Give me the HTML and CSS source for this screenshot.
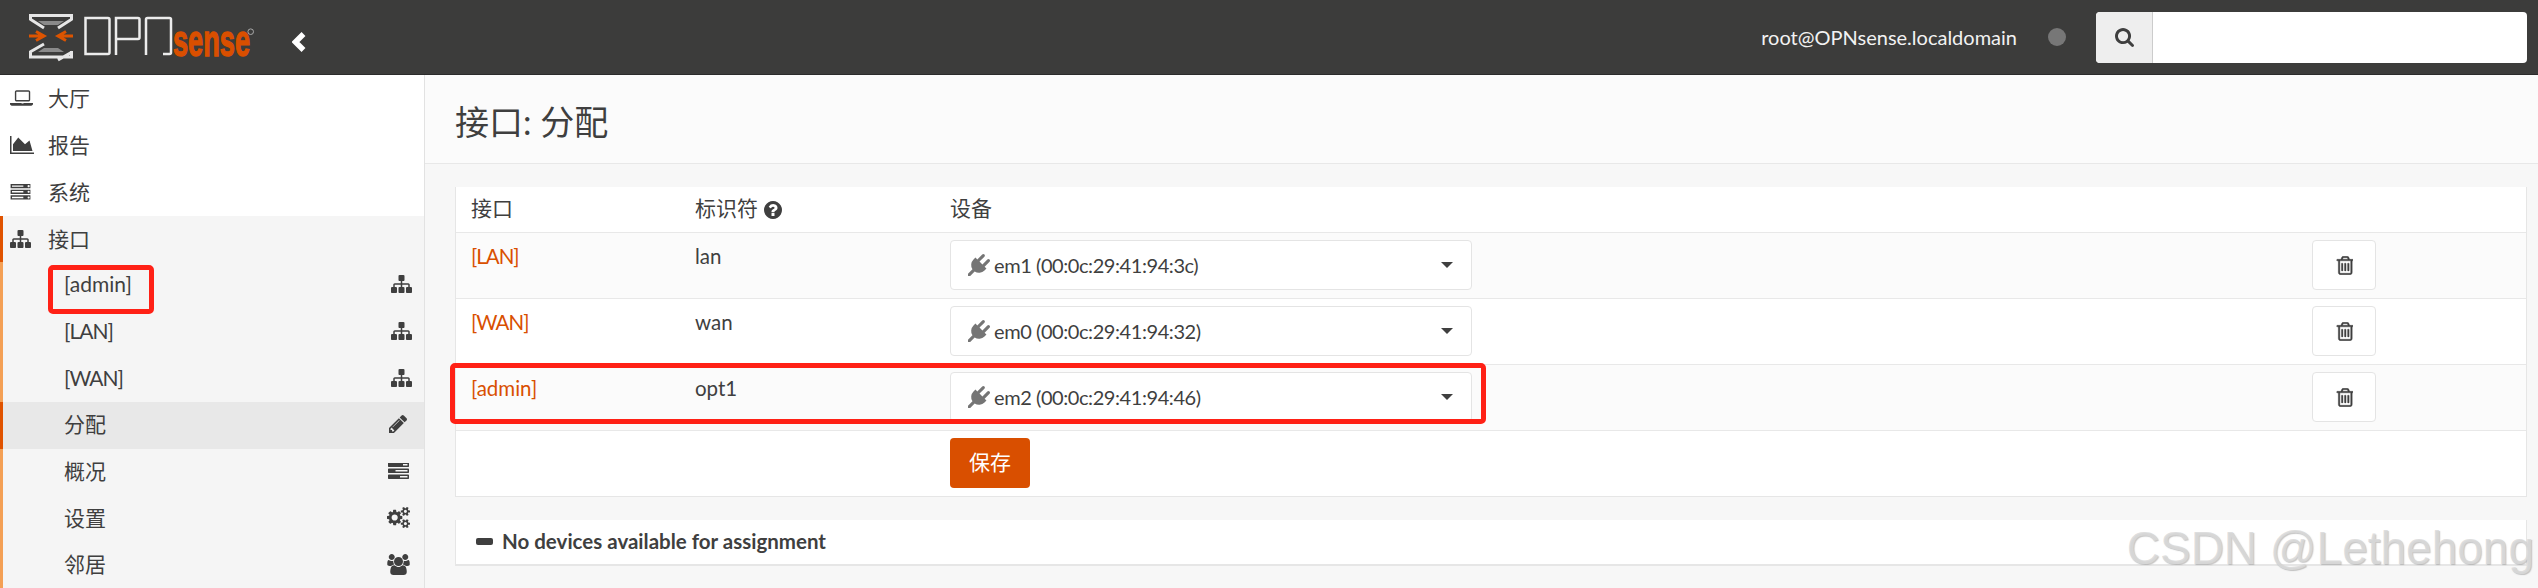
FILE: index.html
```html
<!DOCTYPE html>
<html lang="zh">
<head>
<meta charset="utf-8">
<title>接口: 分配</title>
<link rel="stylesheet" href="styles.css">
</head>
<body>
<svg class="defs" xmlns="http://www.w3.org/2000/svg">
  <symbol id="i-sitemap" viewBox="0 128 1792 1536"><path d="M1792 1248v320q0 40-28 68t-68 28h-320q-40 0-68-28t-28-68v-320q0-40 28-68t68-28h96v-192h-512v192h96q40 0 68 28t28 68v320q0 40-28 68t-68 28h-320q-40 0-68-28t-28-68v-320q0-40 28-68t68-28h96v-192h-512v192h96q40 0 68 28t28 68v320q0 40-28 68t-68 28h-320q-40 0-68-28t-28-68v-320q0-40 28-68t68-28h96v-192q0-52 38-90t90-38h512v-192h-96q-40 0-68-28t-28-68v-320q0-40 28-68t68-28h320q40 0 68 28t28 68v320q0 40-28 68t-68 28h-96v192h512q52 0 90 38t38 90v192h96q40 0 68 28t28 68z"/></symbol>
  <symbol id="i-laptop" viewBox="-192 256 2112 1408"><path d="M416 1280q-66 0-113-47t-47-113v-704q0-66 47-113t113-47h1088q66 0 113 47t47 113v704q0 66-47 113t-113 47h-1088zm-32-864v704q0 13 9.5 22.5t22.5 9.5h1088q13 0 22.5-9.5t9.5-22.5v-704q0-13-9.5-22.5t-22.5-9.5h-1088q-13 0-22.5 9.5t-9.5 22.5zm1376 992h160v96q0 66-75 113t-181 47h-1600q-106 0-181-47t-75-113v-96h1952zm-720 96q16 0 16-16t-16-16h-160q-16 0-16 16t16 16h160z"/></symbol>
  <symbol id="i-area" viewBox="0 128 2048 1536"><path d="M2048 1536v128h-2048v-1536h128v1408h1920zm-384-1024l256 896h-1664v-576l448-576 576 576z"/></symbol>
  <symbol id="i-server" viewBox="0 128 1792 1536"><path d="M128 1408h1024v-128h-1024v128zm0-512h1024v-128h-1024v128zm1600 448q0-40-28-68t-68-28-68 28-28 68 28 68 68 28 68-28 28-68zm-1600-960h1024v-128h-1024v128zm1600 448q0-40-28-68t-68-28-68 28-28 68 28 68 68 28 68-28 28-68zm0-512q0-40-28-68t-68-28-68 28-28 68 28 68 68 28 68-28 28-68zm64 832v384h-1792v-384h1792zm0-512v384h-1792v-384h1792zm0-512v384h-1792v-384h1792z"/></symbol>
  <symbol id="i-tasks" viewBox="0 192 1792 1408"><path d="M1024 1408h640v-128h-640v128zm-384-512h1024v-128h-1024v128zm640-512h384v-128h-384v128zm512 832v256q0 26-19 45t-45 19h-1664q-26 0-45-19t-19-45v-256q0-26 19-45t45-19h1664q26 0 45 19t19 45zm0-512v256q0 26-19 45t-45 19h-1664q-26 0-45-19t-19-45v-256q0-26 19-45t45-19h1664q26 0 45 19t19 45zm0-512v256q0 26-19 45t-45 19h-1664q-26 0-45-19t-19-45v-256q0-26 19-45t45-19h1664q26 0 45 19t19 45z"/></symbol>
  <symbol id="i-pencil" viewBox="128 149 1515 1515"><path d="M491 1536l91-91-235-235-91 91v107h128v128h107zm523-928q0-22-22-22-10 0-17 7l-542 542q-7 7-7 17 0 22 22 22 10 0 17-7l542-542q7-7 7-17zm-54-192l416 416-832 832h-416v-416zm683 96q0 53-37 90l-166 166-416-416 166-165q36-38 90-38 53 0 91 38l235 234q37 39 37 91z"/></symbol>
  <symbol id="i-cogs" viewBox="0 64 1920 1664"><path d="M896 896q0-106-75-181t-181-75-181 75-75 181 75 181 181 75 181-75 75-181zm768 512q0-52-38-90t-90-38-90 38-38 90q0 53 37.5 90.5t90.5 37.5 90.5-37.5 37.5-90.5zm0-1024q0-52-38-90t-90-38-90 38-38 90q0 53 37.5 90.5t90.5 37.5 90.5-37.5 37.5-90.5zm-384 421v185q0 10-7 19.5t-16 10.5l-155 24q-11 35-32 76 34 48 90 115 7 11 7 20 0 12-7 19-23 30-82.5 89.5t-78.5 59.5q-11 0-21-7l-115-90q-37 19-77 31-11 108-23 155-7 24-30 24h-186q-11 0-20-7.5t-10-17.5l-23-153q-34-10-75-31l-118 89q-7 7-20 7-11 0-21-8-144-133-144-160 0-9 7-19 10-14 41-53t47-61q-23-44-35-82l-152-24q-10-1-17-9.5t-7-19.5v-185q0-10 7-19.5t16-10.5l155-24q11-35 32-76-34-48-90-115-7-11-7-20 0-12 7-20 22-30 82-89t79-59q11 0 21 7l115 90q34-18 77-32 11-108 23-154 7-24 30-24h186q11 0 20 7.5t10 17.5l23 153q34 10 75 31l118-89q8-7 20-7 11 0 21 8 144 133 144 160 0 8-7 19-12 16-42 54t-45 60q23 48 34 82l152 23q10 2 17 10.5t7 19.5zm640 533v140q0 16-149 31-12 27-30 52 51 113 51 138 0 4-4 7-122 71-124 71-8 0-46-47t-52-68q-20 2-30 2t-30-2q-14 21-52 68t-46 47q-2 0-124-71-4-3-4-7 0-25 51-138-18-25-30-52-149-15-149-31v-140q0-16 149-31 13-29 30-52-51-113-51-138 0-4 4-7 4-2 35-20t59-34 30-16q8 0 46 46.5t52 67.5q20-2 30-2t30 2q51-71 92-112l6-2q4 0 124 70 4 3 4 7 0 25-51 138 17 23 30 52 149 15 149 31zm0-1024v140q0 16-149 31-12 27-30 52 51 113 51 138 0 4-4 7-122 71-124 71-8 0-46-47t-52-68q-20 2-30 2t-30-2q-14 21-52 68t-46 47q-2 0-124-71-4-3-4-7 0-25 51-138-18-25-30-52-149-15-149-31v-140q0-16 149-31 13-29 30-52-51-113-51-138 0-4 4-7 4-2 35-20t59-34 30-16q8 0 46 46.5t52 67.5q20-2 30-2t30 2q51-71 92-112l6-2q4 0 124 70 4 3 4 7 0 25-51 138 17 23 30 52 149 15 149 31z"/></symbol>
  <symbol id="i-users" viewBox="0 0 1920 1792"><path d="M593 896q-162 5-265 128h-134q-82 0-138-40.5t-56-118.5q0-353 124-353 6 0 43.5 21t97.5 42.5 119 21.5q67 0 133-23-5 37-5 66 0 139 81 256zm1071 637q0 120-73 189.5t-194 69.5h-874q-121 0-194-69.5t-73-189.5q0-53 3.5-103.5t14-109 26.5-108.5 43-97.5 62-81 85.5-53.5 111.5-20q10 0 43 21.5t73 48 107 48 135 21.5 135-21.5 107-48 73-48 43-21.5q61 0 111.5 20t85.5 53.5 62 81 43 97.5 26.5 108.5 14 109 3.5 103.5zm-1024-1277q0 106-75 181t-181 75-181-75-75-181 75-181 181-75 181 75 75 181zm704 384q0 159-112.5 271.5t-271.5 112.5-271.5-112.5-112.5-271.5 112.5-271.5 271.5-112.5 271.5 112.5 112.5 271.5zm576 225q0 78-56 118.5t-138 40.5h-134q-103-123-265-128 81-117 81-256 0-29-5-66 66 23 133 23 59 0 119-21.5t97.5-42.5 43.5-21q124 0 124 353zm-128-609q0 106-75 181t-181 75-181-75-75-181 75-181 181-75 181 75 75 181z"/></symbol>
  <symbol id="i-plug" viewBox="0 0 1792 1792"><path d="M1755 453q37 38 37 90.5t-37 90.5l-401 400 150 150-160 160q-163 163-389.5 186.5t-411.5-100.5l-362 362h-181v-181l362-362q-124-185-100.5-411.5t186.5-389.5l160-160 150 150 400-401q38-37 91-37t90 37 37 90.5-37 90.5l-400 401 234 234 401-400q38-37 91-37t90 37z"/></symbol>
  <symbol id="i-trash" viewBox="128 128 1408 1536"><path d="M704 736v576q0 14-9 23t-23 9h-64q-14 0-23-9t-9-23v-576q0-14 9-23t23-9h64q14 0 23 9t9 23zm256 0v576q0 14-9 23t-23 9h-64q-14 0-23-9t-9-23v-576q0-14 9-23t23-9h64q14 0 23 9t9 23zm256 0v576q0 14-9 23t-23 9h-64q-14 0-23-9t-9-23v-576q0-14 9-23t23-9h64q14 0 23 9t9 23zm128 724v-948h-896v948q0 22 7 40.5t14.5 27 10.5 8.5h832q3 0 10.5-8.5t14.5-27 7-40.5zm-672-1076h448l-48-117q-7-9-17-11h-317q-10 2-17 11zm928 32v64q0 14-9 23t-23 9h-96v948q0 83-47 143.5t-113 60.5h-832q-66 0-113-58.5t-47-141.5v-952h-96q-14 0-23-9t-9-23v-64q0-14 9-23t23-9h309l70-167q15-37 54-63t79-26h320q40 0 79 26t54 63l70 167h309q14 0 23 9t9 23z"/></symbol>
  <symbol id="i-search" viewBox="64 128 1664 1664"><path d="M1216 832q0-185-131.5-316.5t-316.5-131.5-316.5 131.5-131.5 316.5 131.5 316.5 316.5 131.5 316.5-131.5 131.5-316.5zm512 832q0 52-38 90t-90 38q-54 0-90-38l-343-342q-179 124-399 124-143 0-273.5-55.5t-225-150-150-225-55.5-273.5 55.5-273.5 150-225 225-150 273.5-55.5 273.5 55.5 225 150 150 225 55.5 273.5q0 220-124 399l343 343q37 37 37 90z"/></symbol>
  <symbol id="i-help" viewBox="128 128 1536 1536"><path d="M1024 1376v-192q0-14-9-23t-23-9h-192q-14 0-23 9t-9 23v192q0 14 9 23t23 9h192q14 0 23-9t9-23zm256-672q0-88-55.5-163t-138.5-116-170-41q-243 0-371 213-15 24 8 42l132 100q7 6 19 6 16 0 25-12 53-68 86-92 34-24 86-24 48 0 85.5 26t37.5 59q0 38-20 61t-68 45q-63 28-115.5 86.5t-52.5 125.5v36q0 14 9 23t23 9h192q14 0 23-9t9-23q0-19 21.5-49.5t54.5-49.5q32-18 49-28.5t46-35 44.5-48 28-60.5 12.5-81zm384 192q0 209-103 385.5t-279.5 279.5-385.5 103-385.5-103-279.5-279.5-103-385.5 103-385.5 279.5-279.5 385.5-103 385.5 103 279.5 279.5 103 385.5z"/></symbol>
</svg>

<header class="topbar">
  <svg class="logo" viewBox="0 -4 240 60" xmlns="http://www.w3.org/2000/svg" aria-label="OPNsense">
    <path class="logo-dark" d="M9 9h26l-6 4H15zM15 36h14l6 4H9z"/>
    <path class="logo-line" d="M1.500 8V3.500h41V8M1 7l14 9M43 7l-14 9M1.500 39v6h41v-6M1 40l14-8M43 40l-14 8"/>
    <path class="logo-orange" d="M0 24h13M7 19.500l8 4.500-8 4.500M44 24H31M37 19.500 29 24l8 4.500"/>
    <path class="logo-word" d="M56.500 6H79q1.500 0 1.500 1.500v33q0 1.500-1.500 1.500H56.500zM87 43V6h22q1.500 0 1.500 1.500v18q0 1.500-1.500 1.500H87M117 43V7.500q0-1.500 1.500-1.500h22q1.500 0 1.500 1.500v33q0 1.500-1.500 1.500H134"/>
    <text class="logo-sense" x="144" y="44" textLength="77" lengthAdjust="spacingAndGlyphs">sense</text>
    <circle class="logo-reg" cx="221.700" cy="19.700" r="2.800"/>
  </svg>
  <svg class="collapse" viewBox="0 0 14 20" xmlns="http://www.w3.org/2000/svg"><path d="M11.500 2 3.500 10l8 8"/></svg>
  <span class="user">root@OPNsense.localdomain</span>
  <span class="status-dot"></span>
  <div class="search">
    <span class="search-addon"><svg class="ic ic-search"><use href="#i-search"/></svg></span>
    <span class="search-input"></span>
  </div>
</header>

<div class="shell">
  <nav class="sidebar">
    <a class="nav-main"><span class="nav-ic"><svg class="ic ic-laptop"><use href="#i-laptop"/></svg></span><span>大厅</span></a>
    <a class="nav-main"><span class="nav-ic"><svg class="ic ic-area"><use href="#i-area"/></svg></span><span>报告</span></a>
    <a class="nav-main"><span class="nav-ic"><svg class="ic ic-server"><use href="#i-server"/></svg></span><span>系统</span></a>
    <a class="nav-main nav-open"><span class="nav-ic"><svg class="ic ic-sitemap"><use href="#i-sitemap"/></svg></span><span>接口</span></a>
    <a class="nav-sub"><span>[admin]</span><svg class="ic ic-sitemap"><use href="#i-sitemap"/></svg></a>
    <a class="nav-sub"><span class="caps">[LAN]</span><svg class="ic ic-sitemap"><use href="#i-sitemap"/></svg></a>
    <a class="nav-sub"><span class="caps">[WAN]</span><svg class="ic ic-sitemap"><use href="#i-sitemap"/></svg></a>
    <a class="nav-sub nav-active"><span>分配</span><svg class="ic ic-pencil"><use href="#i-pencil"/></svg></a>
    <a class="nav-sub"><span>概况</span><svg class="ic ic-tasks"><use href="#i-tasks"/></svg></a>
    <a class="nav-sub"><span>设置</span><svg class="ic ic-cogs"><use href="#i-cogs"/></svg></a>
    <a class="nav-sub"><span>邻居</span><svg class="ic ic-users"><use href="#i-users"/></svg></a>
  </nav>

  <main class="main">
    <div class="page-head"><h1>接口: 分配</h1></div>
    <div class="content">
      <section class="card">
        <table class="grid">
          <colgroup><col class="c1"><col class="c2"><col class="c3"><col class="c4"></colgroup>
          <thead>
            <tr><th>接口</th><th>标识符 <svg class="ic ic-help"><use href="#i-help"/></svg></th><th>设备</th><th></th></tr>
          </thead>
          <tbody>
            <tr class="odd">
              <td class="txt"><a class="link caps">[LAN]</a></td><td class="txt">lan</td>
              <td><div class="select"><svg class="ic ic-plug"><use href="#i-plug"/></svg><span class="sel-text">em1 (00:0c:29:41:94:3c)</span><span class="caret"></span></div></td>
              <td><button class="del"><svg class="ic ic-trash"><use href="#i-trash"/></svg></button></td>
            </tr>
            <tr>
              <td class="txt"><a class="link caps">[WAN]</a></td><td class="txt">wan</td>
              <td><div class="select"><svg class="ic ic-plug"><use href="#i-plug"/></svg><span class="sel-text">em0 (00:0c:29:41:94:32)</span><span class="caret"></span></div></td>
              <td><button class="del"><svg class="ic ic-trash"><use href="#i-trash"/></svg></button></td>
            </tr>
            <tr class="odd">
              <td class="txt"><a class="link">[admin]</a></td><td class="txt">opt1</td>
              <td><div class="select"><svg class="ic ic-plug"><use href="#i-plug"/></svg><span class="sel-text">em2 (00:0c:29:41:94:46)</span><span class="caret"></span></div></td>
              <td><button class="del"><svg class="ic ic-trash"><use href="#i-trash"/></svg></button></td>
            </tr>
            <tr class="last">
              <td></td><td></td><td><button class="save">保存</button></td><td></td>
            </tr>
          </tbody>
        </table>
      </section>
      <section class="card card-note">
        <span class="minus"></span><strong>No devices available for assignment</strong>
      </section>
    </div>
  </main>
</div>

<div class="mark mark-nav"></div>
<div class="mark mark-row"></div>
<div class="watermark">CSDN @Lethehong</div>
</body>
</html>
```

FILE: styles.css
```css
* { box-sizing: border-box; }
html, body { margin: 0; padding: 0; height: 588px; overflow: hidden; }
body {
  font-family: "Lato", "Noto Sans CJK SC", sans-serif;
  font-size: 21px;
  line-height: 30px;
  color: #3f3f3f;
  background: #f7f7f7;
}
.defs { display: none; }
.ic { display: block; fill: #3f3f3f; flex: none; }
.caps { letter-spacing: -1px; }

/* top bar */
.topbar {
  height: 75px;
  background: #3c3c3b;
  border-bottom: 1px solid #2b2b2b;
  display: flex;
  align-items: center;
  padding-right: 11px;
}
.logo { width: 240px; height: 60px; margin: 2px 0 0 29px; flex: none; }
.logo-line { fill: none; stroke: #e6e6e6; stroke-width: 3; }
.logo-dark { fill: #8a8a8a; }
.logo-orange { fill: none; stroke: #dd5400; stroke-width: 3; }
.logo-word { fill: none; stroke: #ececec; stroke-width: 2.500; }
.logo-sense { font-family: "Liberation Sans", sans-serif; font-weight: 700; font-size: 44px; fill: #d94f00; stroke: #d94f00; stroke-width: 1.400; }
.logo-reg { fill: none; stroke: #aaa; stroke-width: 1; }
.collapse { width: 14px; height: 20px; margin: 9px 0 0 23px; flex: none; }
.collapse path { fill: none; stroke: #fff; stroke-width: 5.500; }
.user { margin-left: auto; color: #f2f2f2; font-size: 20px; }
.status-dot { width: 18px; height: 18px; border-radius: 50%; background: #777; margin: 0 30px 0 31px; }
.search { width: 431px; height: 51px; display: flex; border-radius: 4px; overflow: hidden; background: #fff; }
.search-addon { width: 57px; background: #eee; border-right: 1px solid #ccc; display: flex; align-items: center; justify-content: center; }
.search-input { flex: 1; }
.ic-search { width: 19px; height: 19px; }

/* layout */
.shell { display: flex; height: 513px; }
.sidebar { width: 425px; flex: none; background: #fff; border-right: 1px solid #e2e2e2; display: flex; flex-direction: column; }
.nav-main { height: 47px; display: flex; align-items: center; padding: 0 0 1px 10px; flex: none; }
.nav-ic { width: 38px; display: flex; align-items: center; }
.nav-open { background: #f5f5f5; border-left: 3px solid #e05300; padding-left: 7px; height: 46px; }
.nav-sub { height: 46.700px; flex: none; display: flex; align-items: center; justify-content: space-between; background: #f5f5f5; border-left: 3px solid #f4a055; padding: 0 14px 2px 61px; }
.nav-active { background: #e8e8e8; border-left-color: #e05300; }

.ic-laptop { width: 23px; height: 16px; }
.ic-area { width: 24px; height: 18px; }
.ic-server { width: 21px; height: 17px; }
.ic-sitemap { width: 21px; height: 18px; }
.nav-sub .ic-sitemap { margin-right: -2px; }
.ic-pencil { width: 18px; height: 18px; margin-right: 3px; }
.ic-tasks { width: 21px; height: 17px; margin-right: 1px; }
.ic-cogs { width: 23px; height: 21px; }
.ic-users { width: 23px; height: 21px; }

/* main */
.main { flex: 1; min-width: 0; }
.page-head { height: 89px; background: #fbfbfb; border-bottom: 1px solid #e8e8e8; padding: 6px 0 0 30px; display: flex; align-items: center; }
.page-head h1 { margin: 0; font-weight: 400; font-size: 34px; line-height: 40px; }
.content { padding: 23px 11px 0 30px; }
.card { background: #fff; border: 1px solid #e6e6e6; border-top: 0; }
.grid { width: 100%; border-collapse: separate; border-spacing: 0; table-layout: fixed; }
.c1 { width: 223px; }
.c2 { width: 255px; }
.c4 { width: 230px; }
.grid th { height: 46px; padding: 0 16px 4px; text-align: left; font-weight: 400; border-bottom: 1px solid #e8e8e8; white-space: nowrap; }
.grid th:first-child, .grid td:first-child { padding-left: 15px; }
.ic-help { display: inline-block; width: 18px; height: 18px; vertical-align: -3px; margin-left: 1px; }
.grid td { height: 66px; padding: 7px 16px 0; vertical-align: top; border-bottom: 1px solid #e8e8e8; }
.grid .last td { height: 65px; border-bottom: 0; }
.grid .txt { padding-top: 8px; font-size: 20.500px; }
.odd td { background: #fbfbfb; }
.link { color: #d94f00; }
.select { width: 522px; height: 50px; background: #fff; border: 1px solid #e4e4e4; border-radius: 4px; display: flex; align-items: center; padding: 0 18px 0 17px; }
.ic-plug { width: 22px; height: 22px; fill: #757575; margin-right: 4px; }
.sel-text { flex: 1; font-size: 20px; letter-spacing: -.43px; }
.caret { width: 0; height: 0; border-left: 6px solid transparent; border-right: 6px solid transparent; border-top: 6px solid #3f3f3f; }
.del { width: 64px; height: 50px; padding: 0; background: #fff; border: 1px solid #e4e4e4; border-radius: 4px; display: flex; align-items: center; justify-content: center; }
.ic-trash { width: 17px; height: 19px; stroke: #3f3f3f; stroke-width: 30; }
.save { width: 80px; height: 50px; padding: 0 0 2px; background: #d94f00; border: 0; border-radius: 4px; color: #fff; font: inherit; }

.card-note { margin-top: 23px; height: 46px; border-bottom-width: 2px; display: flex; align-items: center; padding: 0 0 2px 20px; }
.minus { width: 17px; height: 7px; border-radius: 2px; background: #3f3f3f; margin-right: 9px; }
.card-note strong { font-weight: 700; font-size: 20.500px; }

/* overlays: annotations drawn on top of the screenshot */
.mark { position: absolute; border: 5px solid #ff2116; border-radius: 5px; }
.mark-nav { left: 48px; top: 265px; width: 106px; height: 49px; }
.mark-row { left: 450px; top: 363px; width: 1036px; height: 61px; }
.watermark {
  position: absolute;
  right: 4px;
  top: 521px;
  font-family: "Liberation Sans", sans-serif;
  font-size: 46px;
  line-height: 54px;
  color: rgba(218, 218, 218, .85);
  text-shadow: 1px 1px 1px rgba(140, 140, 140, .5);
  white-space: nowrap;
}
```
